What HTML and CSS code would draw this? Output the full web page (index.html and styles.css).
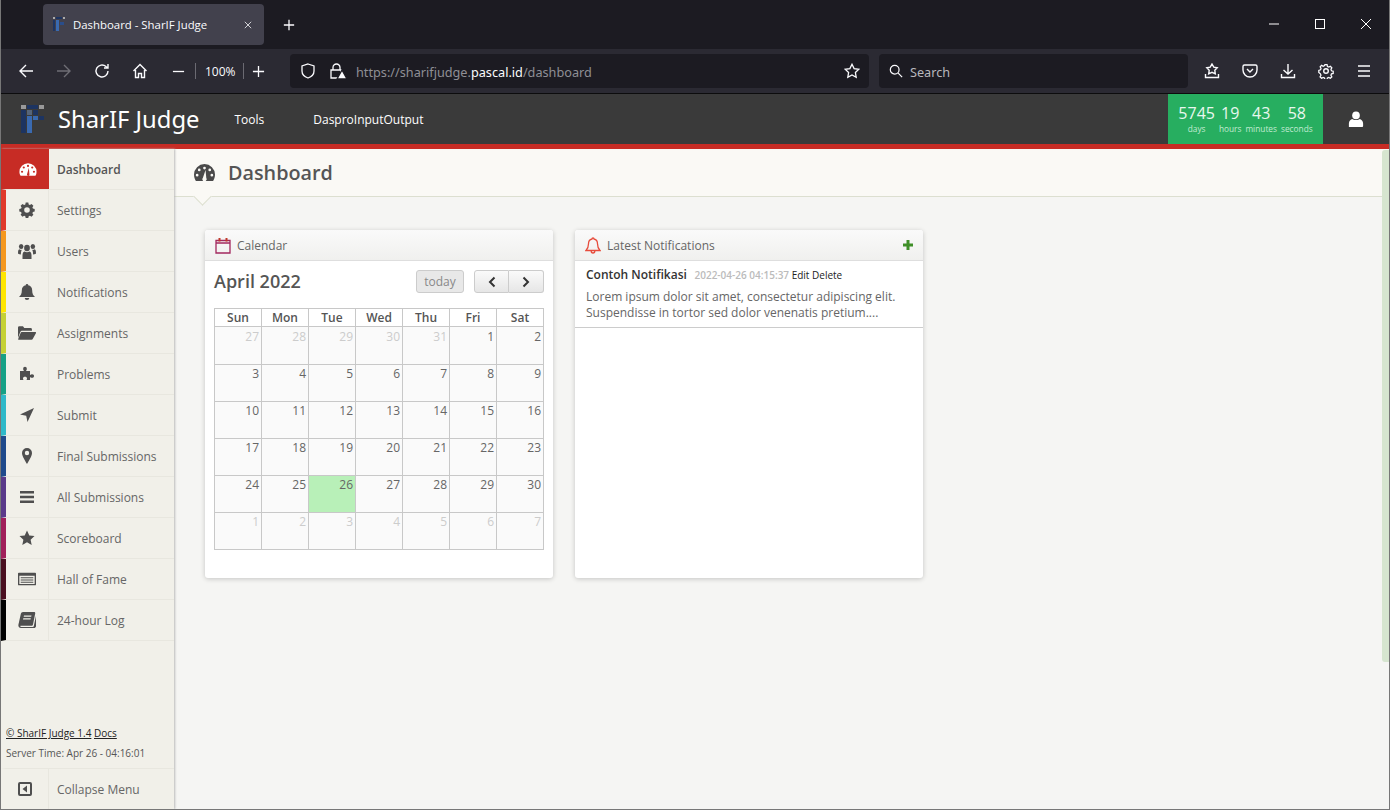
FILE: index.html
```html
<!DOCTYPE html>
<html lang="en">
<head>
    <meta charset="UTF-8">
    <title>Dashboard - SharIF Judge</title>
    <link rel="stylesheet" href="styles.css">
</head>
<body>
<div class="window">

    <!-- browser tabs -->
    <div class="tabbar">
        <div class="tab">
            <svg class="favicon" viewBox="0 0 12 14"><rect x="0" y="0" width="2" height="2" fill="#aaa"/><rect x="3" y="0" width="6" height="2" fill="#1d3461"/><rect x="10" y="0" width="2" height="2" fill="#aaa"/><rect x="0" y="3" width="2" height="11" fill="#1d3461"/><rect x="3" y="3" width="3" height="11" fill="#3a6ab0"/><rect x="7" y="5" width="4" height="3" fill="#2a4d8a"/></svg>
            <span class="tab-title">Dashboard - SharIF Judge</span>
            <svg class="tab-close" viewBox="0 0 10 10"><path d="M1 1l8 8M9 1l-8 8"/></svg>
        </div>
        <svg class="new-tab" viewBox="0 0 14 14"><path d="M7 1v12M1 7h12"/></svg>
        <div class="win-controls">
            <svg viewBox="0 0 12 12"><path d="M1 6h10"/></svg>
            <svg viewBox="0 0 12 12"><rect x="1.500" y="1.500" width="9" height="9"/></svg>
            <svg viewBox="0 0 12 12"><path d="M1 1l10 10M11 1L1 11"/></svg>
        </div>
    </div>

    <!-- browser toolbar -->
    <div class="toolbar">
        <div class="tool-btn"><svg viewBox="0 0 16 16"><path d="M15 8H2M8 2L2 8l6 6"/></svg></div>
        <div class="tool-btn dim"><svg viewBox="0 0 16 16"><path d="M1 8h13M8 2l6 6-6 6"/></svg></div>
        <div class="tool-btn"><svg viewBox="0 0 16 16"><path d="M14 8a6 6 0 1 1-2-4.500L14 5M14 1v4h-4"/></svg></div>
        <div class="tool-btn"><svg viewBox="0 0 16 16"><path d="M1.500 8L8 1.500 14.500 8M3.500 7v7.500h3v-4h3v4h3V7"/></svg></div>
        <div class="zoom-group">
            <svg class="zoom-minus" viewBox="0 0 14 14"><path d="M1 7h12"/></svg>
            <span class="zoom-sep"></span>
            <span class="zoom-val">100%</span>
            <span class="zoom-sep"></span>
            <svg class="zoom-plus" viewBox="0 0 14 14"><path d="M7 1v12M1 7h12"/></svg>
        </div>
        <div class="urlbar">
            <svg class="url-icon shield" viewBox="0 0 16 16"><path d="M8 1l6 2v5c0 3.500-3 6-6 7-3-1-6-3.500-6-7V3z"/></svg>
            <svg class="url-icon lock" viewBox="0 0 18 16"><path d="M4 7V4.500a3.500 3.500 0 0 1 7 0V7M2 7h10v8H2z"/><path class="warn" d="M13 7l5 9H8z"/></svg>
            <span class="url-text">https://sharifjudge.<b>pascal.id</b>/dashboard</span>
            <svg class="url-star" viewBox="0 0 16 16"><path d="M8 1.300l2.100 4.300 4.700.7-3.400 3.300.8 4.700L8 12l-4.200 2.300.8-4.700L1.200 6.300l4.700-.7z"/></svg>
        </div>
        <div class="searchbar">
            <svg viewBox="0 0 16 16"><circle cx="6.500" cy="6.500" r="5"/><path d="M10.500 10.500L15 15"/></svg>
            <span class="search-text">Search</span>
        </div>
        <div class="tool-right">
            <div class="tool-btn"><svg viewBox="0 0 16 16"><path d="M8 1l1.800 3.200 3.400.6-2.400 2.500.5 3.500L8 9.300l-3.300 1.500.5-3.500-2.400-2.500 3.400-.6zM1.500 11v3.500h13V11"/></svg></div>
            <div class="tool-btn"><svg viewBox="0 0 16 16"><path d="M2.500 2h11A1.500 1.500 0 0 1 15 3.500V7a7 7 0 0 1-14 0V3.500A1.500 1.500 0 0 1 2.500 2zM5 6l3 3 3-3"/></svg></div>
            <div class="tool-btn"><svg viewBox="0 0 16 16"><path d="M8 1v10M3.500 7L8 11l4.500-4M1.500 11v3.500h13V11"/></svg></div>
            <div class="tool-btn"><svg viewBox="0 0 16 16"><circle cx="8" cy="8" r="2.300"/><path d="M6.800 1h2.400l.4 2 1.500.7 1.800-1 1.600 1.700-1 1.800.6 1.500 1.900.6v2.400l-1.900.5-.6 1.500 1 1.800-1.700 1.600-1.700-1-1.500.6-.5 1.900H6.800l-.5-1.900-1.500-.6-1.700 1-1.700-1.600 1-1.800-.6-1.500L0 9.700V7.300l1.900-.6.600-1.500-1-1.800 1.600-1.700 1.800 1 1.500-.7z" transform="translate(.8 .8) scale(.9)"/></svg></div>
            <div class="tool-btn"><svg viewBox="0 0 16 16"><path d="M2 3h12M2 8h12M2 13h12"/></svg></div>
        </div>
    </div>

    <!-- site header -->
    <header class="topbar">
        <svg class="logo" viewBox="0 0 23 28"><rect x="0" y="0" width="5" height="4" fill="#999"/><rect x="6" y="0" width="11" height="4" fill="#1d3461"/><rect x="18" y="0" width="5" height="4" fill="#999"/><rect x="0" y="5" width="5" height="23" fill="#1d3461"/><rect x="6" y="5" width="5" height="5" fill="#56657a"/><rect x="6" y="11" width="5" height="17" fill="#3a6ab0"/><rect x="12" y="5" width="5" height="5" fill="#1d3461"/><rect x="12" y="11" width="5" height="4" fill="#3a6ab0"/><rect x="18" y="11" width="5" height="4" fill="#1d3461"/></svg>
        <a class="brand">SharIF Judge</a>
        <nav class="topnav">
            <a>Tools</a>
            <a>DasproInputOutput</a>
        </nav>
        <div class="countdown">
            <div class="count-unit"><span class="count-num">5745</span><span class="count-label">days</span></div>
            <div class="count-unit"><span class="count-num">19</span><span class="count-label">hours</span></div>
            <div class="count-unit"><span class="count-num">43</span><span class="count-label">minutes</span></div>
            <div class="count-unit"><span class="count-num">58</span><span class="count-label">seconds</span></div>
        </div>
        <svg class="user-icon" viewBox="0 0 18 18"><circle cx="9" cy="5" r="4.300"/><path d="M1 18v-4c0-3 2-4.500 4-5 1 1.500 7 1.500 8 0 2 .5 4 2 4 5v3a1 1 0 0 1-1 1z"/></svg>
    </header>

    <div class="layout">
        <!-- side menu -->
        <aside class="sidebar">
            <ul class="menu">
                <li class="menu-item active"><span class="menu-icon"><svg viewBox="0 0 20 16"><path d="M10 1a9.500 9.500 0 0 0-9.500 9.500c0 1.800.5 3.400 1.300 4.500h16.400c.8-1.100 1.300-2.700 1.300-4.500A9.500 9.500 0 0 0 10 1z"/><g class="dial"><circle cx="10" cy="4" r="1.200"/><circle cx="5.300" cy="5.800" r="1.200"/><circle cx="14.700" cy="5.800" r="1.200"/><circle cx="3.400" cy="10.500" r="1.200"/><circle cx="16.600" cy="10.500" r="1.200"/><path d="M9 13l2-7 .6 7.500a1.400 1.400 0 1 1-2.600-.5z"/></g></svg></span><span>Dashboard</span></li>
                <li class="menu-item s-settings"><span class="menu-icon"><svg viewBox="0 0 16 16"><path fill-rule="evenodd" d="M6.700 1h2.600l.4 1.900 1.200.5 1.600-1 1.900 1.800-1 1.700.5 1.200 1.800.4v2.600l-1.800.4-.5 1.200 1 1.600-1.900 1.900-1.600-1-1.200.5-.4 1.800H6.700l-.4-1.800-1.200-.5-1.600 1-1.900-1.900 1-1.600-.5-1.200-1.800-.4V7.500l1.800-.4.500-1.200-1-1.700 1.900-1.800 1.600 1 1.200-.5zM8 5.700a2.800 2.800 0 1 0 0 5.600 2.800 2.800 0 0 0 0-5.600z" transform="translate(0 -.5)"/></svg></span><span>Settings</span></li>
                <li class="menu-item s-users"><span class="menu-icon wide"><svg viewBox="0 0 20 16" preserveAspectRatio="none"><circle cx="10" cy="5" r="3.200"/><circle cx="3.500" cy="3.500" r="2.500"/><circle cx="16.500" cy="3.500" r="2.500"/><path d="M5 16v-4c0-2.500 1.500-3.500 2.500-3.500 1.200 1 3.800 1 5 0 1 0 2.500 1 2.500 3.500v4zM0 10c0-3 1-3.700 1.500-3.700 1 .7 2.500.8 3.200.2-.8.600-1.400 2-1.500 4.900C1 11.400 0 11 0 10zM20 10c0-3-1-3.700-1.500-3.700-1 .7-2.500.8-3.200.2.800.6 1.400 2 1.500 4.900 2.200 0 3.200-.4 3.200-1.400z"/></svg></span><span>Users</span></li>
                <li class="menu-item s-notif"><span class="menu-icon"><svg viewBox="1 0 14 16" preserveAspectRatio="none"><path d="M8 0a1 1 0 0 1 1 1.200c2.300.5 3.500 2.300 3.500 4.800 0 4 1 5.500 2.500 7H1c1.500-1.500 2.500-3 2.500-7 0-2.500 1.200-4.300 3.500-4.800A1 1 0 0 1 8 0zM6 14h4a2 2 0 0 1-4 0z"/></svg></span><span>Notifications</span></li>
                <li class="menu-item s-assign"><span class="menu-icon wide"><svg viewBox="0 0 20 15"><path d="M0 13V1.500A1.500 1.500 0 0 1 1.500 0h4L7 2h7a1.500 1.500 0 0 1 1.500 1.500V5H5C3.500 5 3 5.500 2.500 6.500z"/><path d="M4 6.500h15c1 0 1.300.6.900 1.300L16.500 14c-.3.600-.8 1-1.500 1H1c-.8 0-1-.6-.7-1.200L3 7.300c.2-.5.500-.8 1-.8z"/></svg></span><span>Assignments</span></li>
                <li class="menu-item s-problems"><span class="menu-icon"><svg viewBox="0 0 16 16"><path d="M1 5h4c-.8-1-.8-1.600-.8-2.300C4.200 1.500 5 .8 6 .8s1.800.7 1.800 1.900c0 .7 0 1.300-.8 2.300h4v4c1-.7 1.500-.8 2.200-.8 1.200 0 1.800.8 1.800 1.800s-.6 1.800-1.800 1.800c-.7 0-1.200-.1-2.200-.8v3H7.500c.5-.7.500-1.200.5-1.700 0-1-.8-1.600-2-1.600s-2 .6-2 1.600c0 .5 0 1 .5 1.700H1z"/></svg></span><span>Problems</span></li>
                <li class="menu-item s-submit"><span class="menu-icon"><svg viewBox="0 0 16 16"><path d="M15 1L8.500 15 7.200 8.800 1 7.500z"/></svg></span><span>Submit</span></li>
                <li class="menu-item s-final"><span class="menu-icon"><svg viewBox="0 0 12 16"><path fill-rule="evenodd" d="M6 0a5 5 0 0 1 5 5c0 3-3 7.500-5 11-2-3.500-5-8-5-11a5 5 0 0 1 5-5zm0 2.800a2.200 2.200 0 1 0 0 4.400 2.200 2.200 0 0 0 0-4.400z"/></svg></span><span>Final Submissions</span></li>
                <li class="menu-item s-all"><span class="menu-icon"><svg viewBox="0 0 16 16"><path d="M1 2h14v2.400H1zM1 6.800h14v2.400H1zM1 11.600h14V14H1z"/></svg></span><span>All Submissions</span></li>
                <li class="menu-item s-score"><span class="menu-icon"><svg viewBox="0 0 16 16"><path d="M8 .5l2.300 5 5.200.6-3.900 3.600 1.100 5.300L8 12.300 3.300 15l1.100-5.300L.5 6.100l5.200-.6z"/></svg></span><span>Scoreboard</span></li>
                <li class="menu-item s-hall"><span class="menu-icon wide"><svg viewBox="0 0 20 16"><path fill-rule="evenodd" d="M1 1h18a1 1 0 0 1 1 1v12a1 1 0 0 1-1 1H1a1 1 0 0 1-1-1V2a1 1 0 0 1 1-1zm.500 3.500v9h17v-9zM3 6h14v1.300H3zM3 8.500h14v1.300H3zM3 11h14v1.300H3z"/></svg></span><span>Hall of Fame</span></li>
                <li class="menu-item s-log"><span class="menu-icon wide"><svg viewBox="0 0 18 16"><path fill-rule="evenodd" d="M5 0h11c1 0 1.400.6 1.200 1.500L15 12.500c-.2.800-.7 1.300-1.500 1.300H3c-.6 0-.9.400-.7.800.2.400.6.400 1 .4h11.500c.6 0 .9-.4 1-.9L18 4v10.500c-.3.900-1 1.500-1.800 1.500H3C1.200 16 0 14.500.4 12.800L2.800 2C3 .8 4 0 5 0zm1 3.500l-.3 1.200h7.500l.3-1.200zM5.300 6.200L5 7.400h7.500l.3-1.200z"/></svg></span><span>24-hour Log</span></li>
            </ul>
            <div class="side-info">
                <p><a>&copy; SharIF Judge 1.4</a> <a>Docs</a></p>
                <p class="server-time">Server Time: Apr 26 - 04:16:01</p>
            </div>
            <div class="menu-item collapse"><span class="menu-icon"><svg viewBox="0 0 14 14"><path fill-rule="evenodd" d="M2 0h10a2 2 0 0 1 2 2v10a2 2 0 0 1-2 2H2a2 2 0 0 1-2-2V2a2 2 0 0 1 2-2zm0 2v10h10V2zM9 3.500v7L4.500 7z"/></svg></span><span>Collapse Menu</span></div>
        </aside>

        <!-- main content -->
        <main class="content">
            <div class="page-title">
                <svg class="title-icon" viewBox="0 0 20 16"><path fill-rule="evenodd" d="M10 0a10 10 0 0 0-10 10c0 2.300.7 4.300 1.800 6h16.400c1.100-1.700 1.800-3.700 1.800-6A10 10 0 0 0 10 0zm0 2.500a1.300 1.300 0 1 1 0 2.600 1.300 1.300 0 0 1 0-2.600zM5 4.300a1.300 1.300 0 1 1 0 2.600 1.300 1.300 0 0 1 0-2.600zm10 0a1.300 1.300 0 1 1 0 2.600 1.300 1.300 0 0 1 0-2.600zM3 9.200a1.300 1.300 0 1 1 0 2.600 1.300 1.300 0 0 1 0-2.600zm14 0a1.300 1.300 0 1 1 0 2.600 1.300 1.300 0 0 1 0-2.600zM11 5.500l.7 7.800a2 2 0 1 1-3.200-.2z"/></svg>
                <h1>Dashboard</h1>
                <span class="notch"></span>
            </div>
            <div class="scroll-thumb"></div>

            <div class="cards">
                <section class="card">
                    <div class="card-head">
                        <svg class="card-icon" viewBox="0 0 16 17"><path class="cal" d="M1 3.500h14v12.500H1zM1 6h14"/><path class="cal-top" d="M4.500 1v3.500M11.500 1v3.500"/></svg>
                        <span>Calendar</span>
                    </div>
                    <div class="card-body">
                        <div class="cal-toolbar">
                            <h2>April 2022</h2>
                            <button class="btn today">today</button>
                            <div class="btn-group">
                                <button class="btn"><svg viewBox="0 0 10 12"><path d="M7.500 1.500L3 6l4.500 4.500"/></svg></button>
                                <button class="btn"><svg viewBox="0 0 10 12"><path d="M2.500 1.500L7 6l-4.500 4.500"/></svg></button>
                            </div>
                        </div>
                        <table class="calendar">
                            <thead>
                                <tr><th>Sun</th><th>Mon</th><th>Tue</th><th>Wed</th><th>Thu</th><th>Fri</th><th>Sat</th></tr>
                            </thead>
                            <tbody>
                                <tr><td class="other">27</td><td class="other">28</td><td class="other">29</td><td class="other">30</td><td class="other">31</td><td>1</td><td>2</td></tr>
                                <tr><td>3</td><td>4</td><td>5</td><td>6</td><td>7</td><td>8</td><td>9</td></tr>
                                <tr><td>10</td><td>11</td><td>12</td><td>13</td><td>14</td><td>15</td><td>16</td></tr>
                                <tr><td>17</td><td>18</td><td>19</td><td>20</td><td>21</td><td>22</td><td>23</td></tr>
                                <tr><td>24</td><td>25</td><td class="today-cell">26</td><td>27</td><td>28</td><td>29</td><td>30</td></tr>
                                <tr><td class="other">1</td><td class="other">2</td><td class="other">3</td><td class="other">4</td><td class="other">5</td><td class="other">6</td><td class="other">7</td></tr>
                            </tbody>
                        </table>
                    </div>
                </section>

                <section class="card">
                    <div class="card-head">
                        <svg class="card-icon bell" viewBox="0 0 16 17"><path d="M8 1a1 1 0 0 1 1 1c2.300.5 3.500 2.300 3.500 4.800 0 3.700 1 5.200 2.500 6.700H1c1.500-1.500 2.500-3 2.500-6.700C3.500 4.300 4.700 2.500 7 2a1 1 0 0 1 1-1zM6.200 14c0 1 .8 2 1.800 2s1.800-1 1.800-2"/></svg>
                        <span>Latest Notifications</span>
                        <svg class="add-icon" viewBox="0 0 10 10"><path d="M3.500 0h3v3.500H10v3H6.500V10h-3V6.500H0v-3h3.500z"/></svg>
                    </div>
                    <div class="notif">
                        <div class="notif-head">
                            <b>Contoh Notifikasi</b>
                            <span class="notif-date">2022-04-26 04:15:37</span>
                            <a>Edit</a> <a>Delete</a>
                        </div>
                        <p>Lorem ipsum dolor sit amet, consectetur adipiscing elit. Suspendisse in tortor sed dolor venenatis pretium....</p>
                    </div>
                </section>
            </div>
        </main>
    </div>
</div>
</body>
</html>
```

FILE: styles.css
```css
* {
    box-sizing: border-box;
}

body {
    margin: 0;
    font-family: "Open Sans", sans-serif;
    font-size: 12px;
    color: #555;
    background: #f5f5f3;
    overflow: hidden;
}

.window {
    width: 1390px;
    height: 810px;
    display: flex;
    flex-direction: column;
    border-left: 1px solid #777;
    border-right: 1px solid #777;
    border-bottom: 1px solid #777;
    overflow: hidden;
}

svg {
    display: block;
    flex: none;
}

/* browser tabs */
.tabbar {
    height: 49px;
    flex: none;
    background: #1c1b22;
    display: flex;
    align-items: flex-start;
    padding: 4px 0 0 42px;
}

.tab {
    width: 221px;
    height: 41px;
    background: #42414d;
    border-radius: 4px;
    display: flex;
    align-items: center;
    padding: 0 10px;
    color: #fbfbfe;
    font-size: 11.400px;
}

.favicon {
    width: 12px;
    height: 14px;
    margin-top: -2px;
}

.tab-title {
    margin-left: 8px;
    flex: 1;
}

.tab-close {
    width: 8px;
    height: 8px;
    margin-right: 2px;
    fill: none;
    stroke: #d8d8dc;
    stroke-width: 1.200;
}

.new-tab {
    width: 12px;
    height: 12px;
    margin: 15px 0 0 19px;
    fill: none;
    stroke: #fbfbfe;
    stroke-width: 1.500;
}

.win-controls {
    margin-left: auto;
    display: flex;
    gap: 34px;
    padding: 14px 17px 0 0;
}

.win-controls svg {
    width: 12px;
    height: 12px;
    fill: none;
    stroke: #fff;
    stroke-width: 1;
}

/* browser toolbar */
.toolbar {
    height: 45px;
    flex: none;
    background: #2b2a33;
    border-bottom: 1px solid #0c0c0d;
    display: flex;
    align-items: center;
    padding: 0 6px;
}

.tool-btn {
    width: 38px;
    height: 32px;
    display: flex;
    align-items: center;
    justify-content: center;
}

.tool-btn svg {
    width: 16px;
    height: 16px;
    fill: none;
    stroke: #fbfbfe;
    stroke-width: 1.400;
}

.tool-btn.dim svg {
    stroke: #6f6e75;
}

.zoom-group {
    display: flex;
    align-items: center;
    margin-left: 13px;
    width: 107px;
    color: #fbfbfe;
    font-size: 12px;
}

.zoom-group svg {
    width: 13px;
    height: 13px;
    fill: none;
    stroke: #fbfbfe;
    stroke-width: 1.400;
}

.zoom-minus {
    margin-right: 1px;
}

.zoom-plus {
    margin-left: -1px;
}

.zoom-sep {
    width: 1px;
    height: 16px;
    background: #6b6a72;
    margin: 0 9px;
}

.zoom-val {
    width: 29px;
    text-align: center;
    white-space: nowrap;
}

.urlbar,
.searchbar {
    height: 34px;
    background: #1c1b22;
    border-radius: 4px;
    display: flex;
    align-items: center;
    font-family: "Noto Sans", sans-serif;
    font-size: 12.700px;
}

.urlbar {
    width: 579px;
    margin-left: 11px;
    padding: 0 9px 0 10px;
    color: #8f8f95;
}

.url-icon {
    fill: none;
    stroke: #fbfbfe;
    stroke-width: 1.300;
}

.shield {
    width: 16px;
    height: 16px;
}

.lock {
    width: 18px;
    height: 16px;
    margin-left: 13px;
}

.warn {
    fill: #fbfbfe;
    stroke: #1c1b22;
}

.url-text {
    margin-left: 9px;
    padding-top: 2px;
    flex: 1;
    white-space: nowrap;
}

.url-text b {
    font-weight: 400;
    color: #fbfbfe;
}

.url-star {
    width: 16px;
    height: 16px;
    fill: none;
    stroke: #fbfbfe;
    stroke-width: 1.300;
}

.searchbar {
    width: 309px;
    margin-left: 10px;
    padding: 0 10px;
    color: #b8b8bd;
}

.search-text {
    padding-top: 2px;
}

.searchbar svg {
    width: 14px;
    height: 14px;
    margin-right: 7px;
    fill: none;
    stroke: #fbfbfe;
    stroke-width: 1.400;
}

.tool-right {
    display: flex;
    margin-left: 5px;
}

/* site header */
.topbar {
    height: 55px;
    flex: none;
    background: #3a3a3a;
    border-bottom: 5px solid #c72c25;
    display: flex;
    align-items: center;
    color: #fff;
}

.logo {
    width: 23px;
    height: 28px;
    margin: -1px 0 0 20px;
}

.brand {
    margin-left: 14px;
    font-size: 23.800px;
    font-family: "Noto Sans", sans-serif;
}

.topnav {
    display: flex;
    gap: 49px;
    margin-left: 35px;
    font-size: 12px;
}

.countdown {
    margin-left: auto;
    width: 155px;
    height: 50px;
    background: #27ae60;
    display: flex;
    justify-content: center;
    gap: 4px;
    padding-top: 11px;
}

.count-unit {
    display: flex;
    flex-direction: column;
    align-items: center;
    line-height: 1;
}

.count-num {
    font-size: 16px;
    color: #e8f7ee;
}

.count-label {
    font-size: 8.300px;
    color: #c2ebd2;
    margin-top: 4px;
}

.user-icon {
    width: 16px;
    height: 18px;
    margin: 0 25px;
    fill: #fff;
}

/* side menu */
.layout {
    flex: 1;
    display: flex;
    min-height: 0;
}

.sidebar {
    width: 173px;
    flex: none;
    background: #f1f0e9;
    box-shadow: 1px 0 2px #bbb;
    display: flex;
    flex-direction: column;
    z-index: 1;
}

.menu {
    list-style: none;
    margin: 0;
    padding: 0;
}

.menu-item {
    height: 41px;
    display: flex;
    align-items: center;
    border-bottom: 1px solid #e8e7df;
    border-left: 5px solid transparent;
    color: #666;
}

.menu-icon {
    width: 43px;
    height: 100%;
    display: flex;
    align-items: center;
    justify-content: center;
    border-right: 1px solid #e8e7df;
    margin-right: 8px;
    flex: none;
}

.menu-icon svg {
    width: 16px;
    height: 16px;
    fill: #4f4f4f;
}

.menu-icon.wide svg {
    width: 18px;
}

.menu-item.active {
    border-left-color: #c72c25;
    color: #555;
    font-weight: 600;
}

.active .menu-icon {
    background: #c72c25;
    border-right: 0;
}

.active .menu-icon svg {
    width: 18px;
    height: 15px;
    fill: #fff;
}

.active .dial {
    fill: #c72c25;
}

.s-settings { border-left-color: #e0392b; }
.s-users { border-left-color: #f5981f; }
.s-notif { border-left-color: #ffe600; }
.s-assign { border-left-color: #c5d135; }
.s-problems { border-left-color: #16a085; }
.s-submit { border-left-color: #2fb9c9; }
.s-final { border-left-color: #1f4a8c; }
.s-all { border-left-color: #5a3a8a; }
.s-score { border-left-color: #a0205a; }
.s-hall { border-left-color: #4a0f20; }
.s-log { border-left-color: #000; }

.side-info {
    margin-top: auto;
    padding: 0 0 5px 5px;
    font-size: 10px;
    color: #555;
}

.side-info p {
    margin: 0;
    line-height: 20px;
}

.side-info a {
    color: #222;
    text-decoration: underline;
}

.collapse {
    border-top: 1px solid #e8e7df;
    border-bottom: 0;
}

.collapse .menu-icon svg {
    width: 14px;
    height: 14px;
    margin-left: -4px;
}

/* main content */
.content {
    flex: 1;
    position: relative;
    background: #f5f5f3;
}

.page-title {
    height: 48px;
    background: #faf9f5;
    border-bottom: 1px solid #dcdfd0;
    display: flex;
    align-items: center;
    padding-left: 20px;
    position: relative;
}

.title-icon {
    width: 21px;
    height: 17px;
    fill: #4a4a4a;
}

.page-title h1 {
    margin: 0 0 0 13px;
    font-size: 19.800px;
    font-weight: 600;
    color: #555;
}

.notch {
    position: absolute;
    left: 22px;
    bottom: -7px;
    width: 13px;
    height: 13px;
    background: #faf9f5;
    border-right: 1px solid #dcdfd0;
    border-bottom: 1px solid #dcdfd0;
    transform: rotate(45deg);
}

.scroll-thumb {
    position: absolute;
    right: 0;
    top: 1px;
    width: 7px;
    height: 512px;
    background: #d6e5cf;
    border-radius: 3px 0 0 3px;
}

.cards {
    display: flex;
    gap: 22px;
    padding: 33px 0 0 31px;
}

.card {
    width: 348px;
    height: 348px;
    background: #fff;
    border-radius: 3px;
    box-shadow: 0 1px 5px rgba(0, 0, 0, .2);
}

.card-head {
    height: 31px;
    display: flex;
    align-items: center;
    padding: 0 10px;
    background: linear-gradient(#fafafa, #f0f0ee);
    border-bottom: 1px solid #dedede;
    border-radius: 3px 3px 0 0;
    color: #666;
    font-size: 12px;
}

.card-icon {
    width: 16px;
    height: 17px;
    margin-right: 6px;
    fill: none;
    stroke-width: 1.300;
}

.cal {
    stroke: #a3285e;
}

.cal-top {
    stroke: #c0392b;
    stroke-width: 2;
}

.bell {
    stroke: #e74c3c;
}

.add-icon {
    width: 10px;
    height: 10px;
    margin-left: auto;
    fill: #3f8f28;
}

.card-body {
    padding: 0 9px;
}

.cal-toolbar {
    height: 44px;
    display: flex;
    align-items: center;
    padding-bottom: 3px;
}

.cal-toolbar h2 {
    margin: -2px auto 0 0;
    font-size: 18px;
    font-weight: 600;
    color: #555;
}

.btn {
    height: 23px;
    border: 1px solid #ccc;
    border-radius: 3px;
    background: linear-gradient(#fafafa, #e6e6e6);
    font-family: "Open Sans", sans-serif;
    font-size: 12px;
    color: #333;
    padding: 0;
    display: flex;
    align-items: center;
    justify-content: center;
}

.btn.today {
    width: 48px;
    margin-right: 10px;
    background: #e8e8e8;
    color: #888;
}

.btn-group {
    display: flex;
}

.btn-group .btn {
    width: 35px;
    border-radius: 3px 0 0 3px;
}

.btn-group .btn + .btn {
    border-left: 0;
    border-radius: 0 3px 3px 0;
}

.btn svg {
    width: 10px;
    height: 12px;
    fill: none;
    stroke: #333;
    stroke-width: 2;
}

.calendar {
    width: 330px;
    table-layout: fixed;
    border-collapse: collapse;
    margin-top: 3px;
    background: #fafafa;
}

.calendar th,
.calendar td {
    border: 1px solid #c8c8c8;
    padding: 0;
}

.calendar th {
    height: 18px;
    background: #fff;
    font-size: 12px;
    font-weight: 600;
    color: #555;
    line-height: 1;
}

.calendar td {
    height: 37px;
    vertical-align: top;
    text-align: right;
    padding: 0 2px 0 0;
    font-size: 12px;
    line-height: 17px;
    color: #666;
}

.calendar tbody tr:first-child td {
    height: 38px;
    padding-top: 1px;
}

.calendar td.other {
    color: #ccc;
}

.calendar td.today-cell {
    background: #b8f0b8;
}

.notif {
    padding: 5px 11px 6px;
    border-bottom: 1px solid #ccc;
}

.notif-head {
    font-size: 10px;
    line-height: 18px;
    color: #222;
}

.notif-head b {
    font-size: 12px;
    font-weight: 600;
    color: #333;
    margin-right: 5px;
}

.notif-date {
    font-weight: 600;
    color: #bbb;
}

.notif p {
    margin: 5px 0 0;
    font-size: 12px;
    line-height: 16px;
    color: #666;
}
```
